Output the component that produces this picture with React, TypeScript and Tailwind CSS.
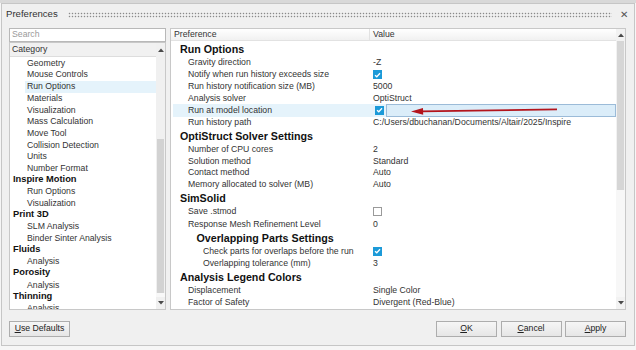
import React from "react";

type Cat = { label: string; sub?: boolean; active?: boolean };

const categories: Cat[] = [
  { label: "Geometry", sub: true },
  { label: "Mouse Controls", sub: true },
  { label: "Run Options", sub: true, active: true },
  { label: "Materials", sub: true },
  { label: "Visualization", sub: true },
  { label: "Mass Calculation", sub: true },
  { label: "Move Tool", sub: true },
  { label: "Collision Detection", sub: true },
  { label: "Units", sub: true },
  { label: "Number Format", sub: true },
  { label: "Inspire Motion" },
  { label: "Run Options", sub: true },
  { label: "Visualization", sub: true },
  { label: "Print 3D" },
  { label: "SLM Analysis", sub: true },
  { label: "Binder Sinter Analysis", sub: true },
  { label: "Fluids" },
  { label: "Analysis", sub: true },
  { label: "Porosity" },
  { label: "Analysis", sub: true },
  { label: "Thinning" },
  { label: "Analysis", sub: true },
];

type Pref =
  | { kind: "section"; label: string; deep?: boolean }
  | {
      kind: "item";
      label: string;
      value?: string;
      check?: boolean;
      deep?: boolean;
      active?: boolean;
    };

const prefs: Pref[] = [
  { kind: "section", label: "Run Options" },
  { kind: "item", label: "Gravity direction", value: "-Z" },
  { kind: "item", label: "Notify when run history exceeds size", check: true },
  { kind: "item", label: "Run history notification size (MB)", value: "5000" },
  { kind: "item", label: "Analysis solver", value: "OptiStruct" },
  { kind: "item", label: "Run at model location", check: true, active: true },
  {
    kind: "item",
    label: "Run history path",
    value: "C:/Users/dbuchanan/Documents/Altair/2025/Inspire",
  },
  { kind: "section", label: "OptiStruct Solver Settings" },
  { kind: "item", label: "Number of CPU cores", value: "2" },
  { kind: "item", label: "Solution method", value: "Standard" },
  { kind: "item", label: "Contact method", value: "Auto" },
  { kind: "item", label: "Memory allocated to solver (MB)", value: "Auto" },
  { kind: "section", label: "SimSolid" },
  { kind: "item", label: "Save .stmod", check: false },
  { kind: "item", label: "Response Mesh Refinement Level", value: "0" },
  { kind: "section", label: "Overlapping Parts Settings", deep: true },
  {
    kind: "item",
    label: "Check parts for overlaps before the run",
    check: true,
    deep: true,
  },
  { kind: "item", label: "Overlapping tolerance (mm)", value: "3", deep: true },
  { kind: "section", label: "Analysis Legend Colors" },
  { kind: "item", label: "Displacement", value: "Single Color" },
  { kind: "item", label: "Factor of Safety", value: "Divergent (Red-Blue)" },
];

function Arrow({ up }: { up?: boolean }) {
  return (
    <svg width="6" height="4" viewBox="0 0 6 4">
      <polygon points={up ? "0,4 3,0.5 6,4" : "0,0 3,3.5 6,0"} fill="#4a4a4a" />
    </svg>
  );
}

function Checkbox({ on }: { on: boolean }) {
  if (!on) {
    return <div className="w-[9px] h-[9px] border border-[#9a9a9a] bg-white" />;
  }
  return (
    <div className="w-[9px] h-[9px] bg-[#1c9ad8] flex items-center justify-center">
      <svg width="7" height="6" viewBox="0 0 7 6">
        <path d="M1 3.2 L2.8 4.8 L6 1.2" stroke="white" strokeWidth="1.3" fill="none" />
      </svg>
    </div>
  );
}

function Btn({ mn, rest }: { mn: string; rest: string }) {
  return (
    <button className="w-[61px] h-[16px] border border-[#adadad] bg-gradient-to-b from-[#f6f6f6] to-[#e6e6e6] text-[8.7px] text-[#222] flex items-center justify-center">
      <span className="underline underline-offset-1">{mn}</span>
      {rest}
    </button>
  );
}

export default function App() {
  return (
    <div className="w-[636px] h-[350px] bg-[#f6f6f6] font-['Liberation_Sans',Arial,sans-serif] overflow-hidden">
      <div className="h-[3px] bg-[#d9d9d9]" />
      <div className="mx-[1px] h-[343px] border border-[#c6c6c6] bg-[#f0f0f0] flex flex-col">
        {/* title bar */}
        <div className="h-[24px] flex items-center pb-[3px] pl-[4px] pr-[6px]">
          <span className="text-[9.6px] text-[#333]">Preferences</span>
          <div className="ml-[10px] flex-1 h-[6px] bg-[radial-gradient(circle,#8a8a8a_0.75px,transparent_1.05px)] bg-size-[3px_3px]" />
          <span className="ml-[8px] text-[10px] text-[#555] leading-none">✕</span>
        </div>

        {/* body */}
        <div className="h-[282px] flex gap-[4px] pl-[7px]">
          {/* left panel */}
          <div className="w-[157px] flex flex-col">
            <div className="h-[14px] border border-[#b8b8b8] bg-white flex items-center pl-[2px] text-[8.7px] text-[#9a9a9a]">
              Search
            </div>
            <div className="h-[268px] border border-[#c8c8c8] bg-white flex">
              <div className="flex-1 overflow-hidden">
                <div className="h-[14px] bg-[#f1f1f1] border-b border-[#dddddd] flex items-center pl-[2px] text-[8.7px] text-[#333]">
                  Category
                </div>
                <div className="pt-[0.5px]">
                  {categories.map((c, i) => (
                    <div
                      key={i}
                      className={`h-[11.68px] flex items-center ${c.sub ? "pl-[15px]" : "pl-[1px]"}`}
                    >
                      <div
                        className={`flex-1 h-full flex items-center pl-[2px] ${c.active ? "bg-[#e5f3fb]" : ""} ${
                          c.sub ? "text-[8.7px] text-[#333]" : "text-[9.3px] font-bold text-[#111]"
                        }`}
                      >
                        {c.label}
                      </div>
                    </div>
                  ))}
                </div>
              </div>
              {/* scrollbar */}
              <div className="w-[9px] bg-[#f0f0f0] flex flex-col">
                <div className="h-[14px] flex items-center justify-center">
                  <Arrow up />
                </div>
                <div className="h-[82px]" />
                <div className="h-[154px] mx-[1px] bg-[#d2d2d2]" />
                <div className="flex-1 bg-[#f8f8f8]" />
                <div className="h-[12px] flex items-center justify-center">
                  <Arrow />
                </div>
              </div>
            </div>
          </div>

          {/* right panel */}
          <div className="w-[456px] border border-[#c8c8c8] bg-white flex">
            <div className="flex-1 overflow-hidden">
              <div className="h-[12.3px] flex bg-gradient-to-b from-white to-[#f1f1f1] border-b border-[#e2e2e2] text-[8.7px] text-[#333]">
                <div className="w-[199px] border-r border-[#e2e2e2] flex items-center pl-[3px]">
                  Preference
                </div>
                <div className="flex-1 flex items-center pl-[3px]">Value</div>
              </div>
              {prefs.map((p, i) => {
                if (p.kind === "section") {
                  return (
                    <div
                      key={i}
                      className={`h-[15.3px] flex items-center text-[10.7px] font-bold text-[#111] ${
                        p.deep ? "pl-[25.5px]" : "pl-[9px]"
                      }`}
                    >
                      {p.label}
                    </div>
                  );
                }
                const h = p.check !== undefined ? "h-[12.5px]" : "h-[11.7px]";
                return (
                  <div key={i} className={`${h} flex text-[8.7px] text-[#333]`}>
                    <div
                      className={`w-[199px] flex items-center ${p.active ? "bg-[#e5f3fb] ml-[2px]" : ""} ${
                        p.deep ? "pl-[32px]" : p.active ? "pl-[15px]" : "pl-[17px]"
                      }`}
                    >
                      {p.label}
                    </div>
                    <div className={`flex-1 flex items-center pl-[3px] ${p.active ? "bg-[#e5f3fb]" : ""}`}>
                      {p.check !== undefined ? <Checkbox on={p.check} /> : <span>{p.value}</span>}
                      {p.active && (
                        <div className="relative ml-[2px] flex-1 h-full border border-[#9bbbd8] bg-[#dbedf9]">
                          {/* red annotation arrow */}
                          <svg
                            className="absolute left-[24px] top-[1px]"
                            width="150"
                            height="9"
                            viewBox="0 0 150 9"
                          >
                            <line x1="10" y1="5.4" x2="146" y2="3.4" stroke="#b3141c" strokeWidth="1.8" />
                            <polygon points="0,5.6 12,2 12.2,8.8" fill="#b3141c" />
                          </svg>
                        </div>
                      )}
                    </div>
                  </div>
                );
              })}
            </div>
            {/* scrollbar */}
            <div className="w-[9px] bg-[#f2f2f2] flex flex-col">
              <div className="h-[12.3px] flex items-center justify-center">
                <Arrow up />
              </div>
              <div className="h-[149px] mx-[1px] bg-[#d6d6d6]" />
              <div className="flex-1 bg-[#f7f7f7]" />
              <div className="h-[12px] flex items-center justify-center">
                <Arrow />
              </div>
            </div>
          </div>
        </div>

        {/* buttons */}
        <div className="mt-[11px] h-[16px] flex pl-[7px] pr-[8px]">
          <Btn mn="U" rest="se Defaults" />
          <div className="flex-1" />
          <div className="flex gap-[3.5px]">
            <Btn mn="O" rest="K" />
            <Btn mn="C" rest="ancel" />
            <Btn mn="A" rest="pply" />
          </div>
        </div>
      </div>
    </div>
  );
}
